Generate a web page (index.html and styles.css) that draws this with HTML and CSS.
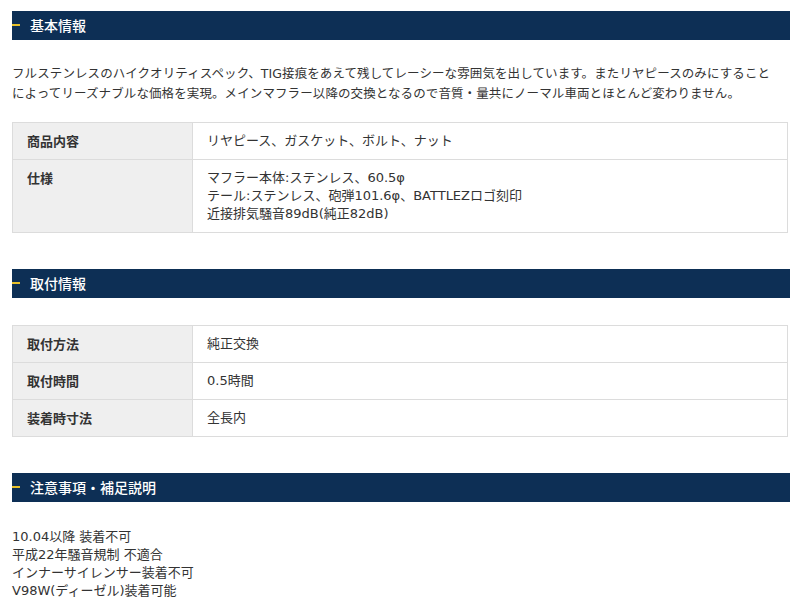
FILE: index.html
```html
<!DOCTYPE html>
<html lang="ja">
<head>
    <meta charset="UTF-8">
    <meta name="viewport" content="width=device-width, initial-scale=1.0">
    <title>商品情報</title>
    <link rel="stylesheet" href="styles.css">
</head>
<body>
    <div class="page">
        <h2 class="sec-title">基本情報</h2>
        <p class="lead">フルステンレスのハイクオリティスペック、TIG接痕をあえて残してレーシーな雰囲気を出しています。またリヤピースのみにすること<br>によってリーズナブルな価格を実現。メインマフラー以降の交換となるので音質・量共にノーマル車両とほとんど変わりません。</p>

        <table class="spec">
            <tr>
                <th>商品内容</th>
                <td>リヤピース、ガスケット、ボルト、ナット</td>
            </tr>
            <tr>
                <th>仕様</th>
                <td>マフラー本体:ステンレス、60.5φ<br>テール:ステンレス、砲弾101.6φ、BATTLEZロゴ刻印<br>近接排気騒音89dB(純正82dB)</td>
            </tr>
        </table>

        <h2 class="sec-title">取付情報</h2>
        <table class="spec spec-tight">
            <tr>
                <th>取付方法</th>
                <td>純正交換</td>
            </tr>
            <tr>
                <th>取付時間</th>
                <td>0.5時間</td>
            </tr>
            <tr>
                <th>装着時寸法</th>
                <td>全長内</td>
            </tr>
        </table>

        <h2 class="sec-title">注意事項・補足説明</h2>
        <p class="notes">10.04以降 装着不可<br>平成22年騒音規制 不適合<br>インナーサイレンサー装着不可<br>V98W(ディーゼル)装着可能</p>
    </div>
</body>
</html>
```

FILE: styles.css
```css
body { margin: 0; background: #fff; color: #333; font-family: "DejaVu Sans", "Noto Sans CJK JP", sans-serif; font-size: 13px; }
.page { padding: 11px 8px 0 12px; }

.sec-title { position: relative; margin: 0; height: 29px; line-height: 29px; padding-left: 18px; background: #0d2f55; color: #fff; font-size: 14px; font-weight: 500; font-family: "Noto Sans CJK JP", sans-serif; }
.sec-title::before { content: ""; position: absolute; left: 0; top: 13px; width: 8px; height: 2px; background: #e6c02a; }

.lead { margin: 24px 0 18px; line-height: 20px; font-size: 12.5px; letter-spacing: 0.1px; white-space: nowrap; }

.spec { width: 776px; border-collapse: collapse; margin-bottom: 36px; }
.spec th, .spec td { border: 1px solid #dcdcdc; padding: 9px 14px; line-height: 18px; text-align: left; vertical-align: top; }
.spec th { width: 151px; background: #efefef; font-weight: bold; font-family: "Noto Sans CJK JP", sans-serif; }
.spec-tight { margin-top: 27px; }

.notes { margin: 26px 0 0; line-height: 18px; }
```
